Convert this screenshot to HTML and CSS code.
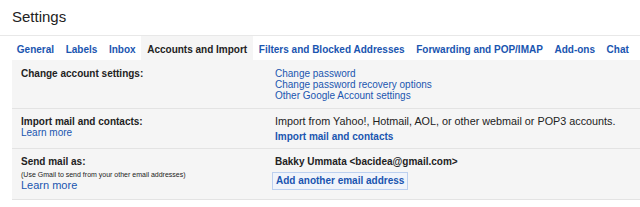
FILE: index.html
```html
<!DOCTYPE html>
<html>
<head>
<meta charset="utf-8">
<link rel="stylesheet" href="styles.css">
</head>
<body>
<div class="title">Settings</div>
<div class="tabs">
  <span class="tab">General</span>
  <span class="tab">Labels</span>
  <span class="tab">Inbox</span>
  <span class="tab active">Accounts and Import</span>
  <span class="tab">Filters and Blocked Addresses</span>
  <span class="tab">Forwarding and POP/IMAP</span>
  <span class="tab">Add-ons</span>
  <span class="tab">Chat</span>
</div>
<div class="panel">
  <div class="row r1">
    <div class="label"><b>Change account settings:</b></div>
    <div class="value">
      <div class="link">Change password</div>
      <div class="link">Change password recovery options</div>
      <div class="link">Other Google Account settings</div>
    </div>
  </div>
  <div class="row r2">
    <div class="label">
      <b>Import mail and contacts:</b>
      <div class="link">Learn more</div>
    </div>
    <div class="value">
      <div class="desc">Import from Yahoo!, Hotmail, AOL, or other webmail or POP3 accounts.</div>
      <div class="link strong mt">Import mail and contacts</div>
    </div>
  </div>
  <div class="row r3">
    <div class="label">
      <b>Send mail as:</b>
      <div class="small">(Use Gmail to send from your other email addresses)</div>
      <div class="link big">Learn more</div>
    </div>
    <div class="value">
      <b>Bakky Ummata &lt;bacidea@gmail.com&gt;</b>
      <div><span class="btn">Add another email address</span></div>
    </div>
  </div>
</div>
</body>
</html>
```
FILE: styles.css
```css
html, body {
  margin: 0;
  padding: 0;
  background: #fff;
}
body {
  font-family: "Liberation Sans", Arial, sans-serif;
  color: #222;
  font-size: 10px;
  width: 640px;
  height: 207px;
  overflow: hidden;
}
.title {
  font-size: 15px;
  line-height: 18px;
  padding: 8px 0 9px 12px;
  color: #222;
  border-bottom: 1px solid #e8e8e8;
}
.tabs {
  display: flex;
  padding-left: 11px;
  height: 24px;
  align-items: stretch;
}
.tab {
  font-weight: bold;
  font-size: 10px;
  color: #1a55b0;
  padding: 0 5.8px;
  display: flex;
  align-items: center;
  padding-top: 3px;
  white-space: nowrap;
}
.tab.active {
  background: #f5f5f5;
  color: #222;
}
.panel {
  margin-left: 12px;
  background: #f5f5f5;
}
.row {
  display: grid;
  grid-template-columns: 263px 1fr;
  border-bottom: 1px solid #e3e3e3;
  line-height: 11px;
}
.label {
  padding-left: 9px;
}
.r1 { padding: 8px 0 8px; height: 32px; }
.r2 { padding: 7px 0 6px; height: 26px; }
.r3 { padding: 7px 0 5px; height: 38px; }
.link {
  color: #1a55b0;
}
.desc {
  font-size: 10.8px;
}
.strong { font-weight: bold; }
.mt { margin-top: 4px; }
.small {
  font-size: 7px;
  line-height: 9px;
  margin-top: 3px;
}
.big {
  font-size: 11px;
  line-height: 13px;
}
.btn {
  display: inline-block;
  margin-top: 5px;
  margin-left: -3px;
  padding: 3px 3px;
  border: 1px solid #bcd0ef;
  background: #f0f4fb;
  color: #1a55b0;
  font-weight: bold;
  line-height: 10px;
}
```
